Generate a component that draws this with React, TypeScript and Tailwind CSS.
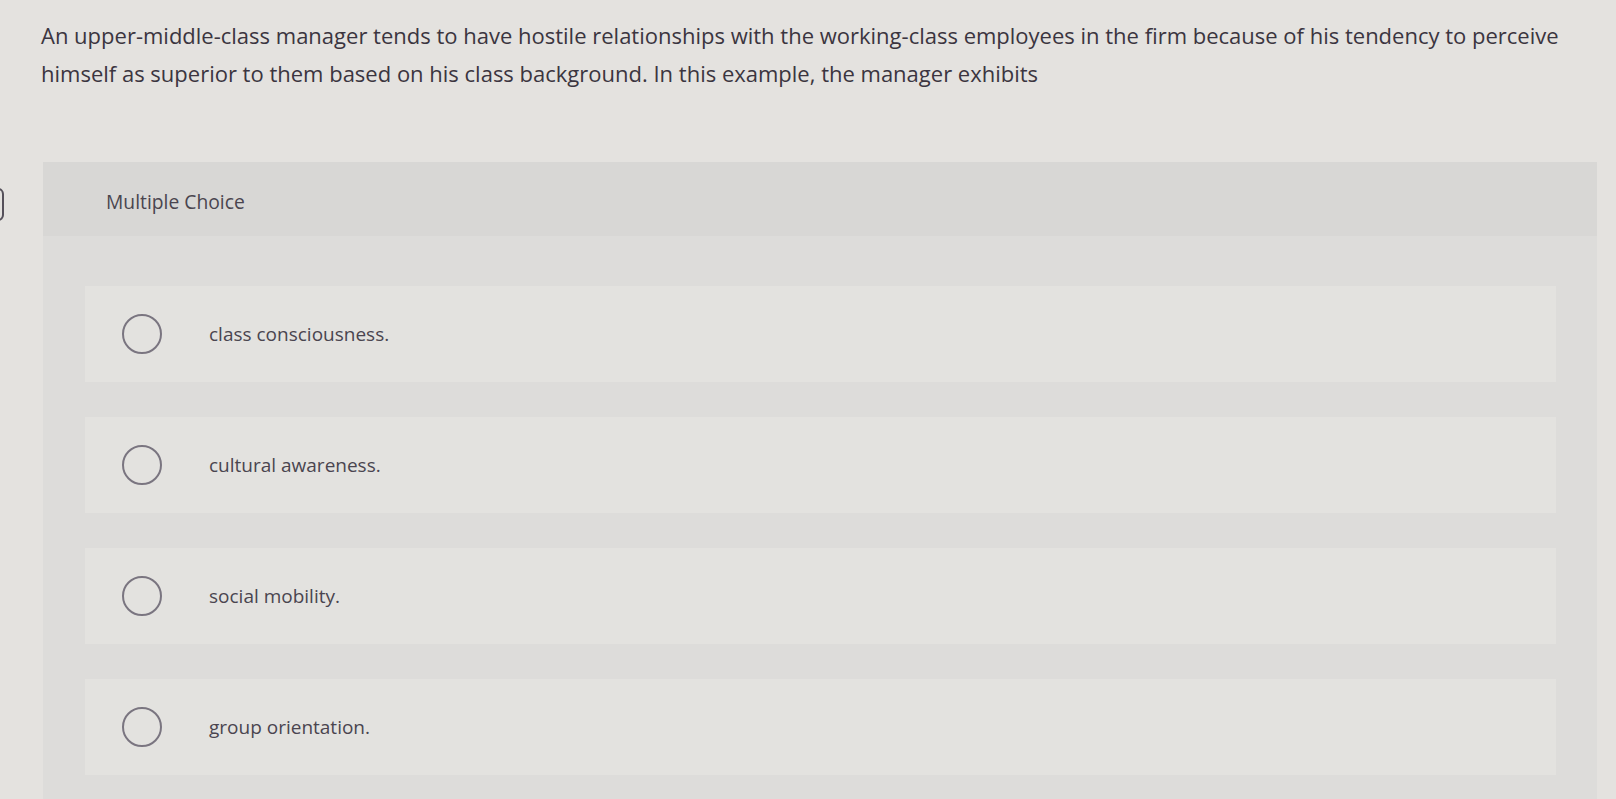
import React from "react";

const choices = [
  "class consciousness.",
  "cultural awareness.",
  "social mobility.",
  "group orientation.",
];

function Radio() {
  return (
    <span className="block h-[40px] w-[40px] shrink-0 rounded-full border-2 border-[#7a7580]" />
  );
}

export default function App() {
  return (
    <div
      className="relative min-h-[799px] w-full overflow-hidden bg-[#e4e2df] text-[#3b3540]"
      style={{ fontFamily: "'Open Sans', Lato, sans-serif" }}
    >
      {/* edge of a tab cut off at the left */}
      <div className="absolute left-[-22px] top-[188px] h-[33px] w-[26px] rounded-md border-2 border-[#55505a]" />

      <div className="px-[41px] pt-[16px]">
        <p className="text-[22px] leading-[38px]">
          An upper-middle-class manager tends to have hostile relationships with
          the working-class employees in the firm because of his tendency to
          perceive himself as superior to them based on his class background. In
          this example, the manager exhibits
        </p>
      </div>

      <div className="ml-[43px] mr-[19px] mt-[70px] bg-[#dddcda] pb-[60px]">
        <div className="flex h-[74px] items-center bg-[#d8d7d5] pl-[63px] pt-[7px]">
          <span className="text-[19.3px] text-[#4a454f]">Multiple Choice</span>
        </div>

        <div className="flex flex-col gap-[35px] pl-[42px] pr-[41px] pt-[50px]">
          {choices.map((c) => (
            <div
              key={c}
              className="flex h-[96px] items-center bg-[#e3e2df] pl-[37px]"
            >
              <Radio />
              <span className="ml-[47px] text-[19px] text-[#4a454f]">{c}</span>
            </div>
          ))}
        </div>
      </div>
    </div>
  );
}
